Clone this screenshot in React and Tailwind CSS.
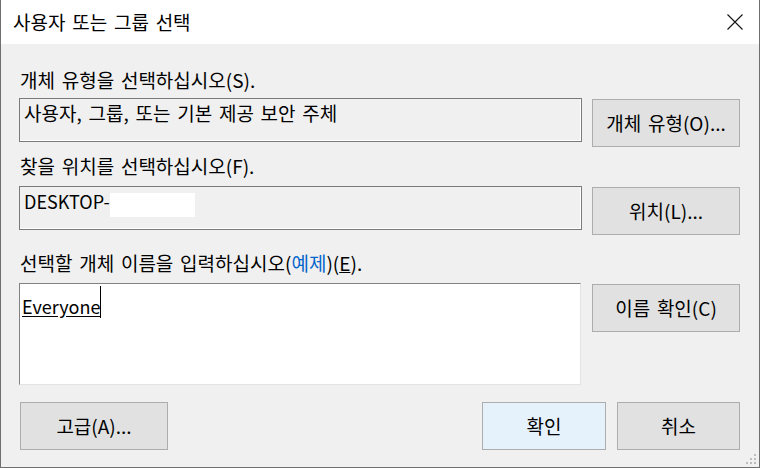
import React from "react";

function Btn({ children, className = "" }) {
  return (
    <div
      className={
        "flex items-center justify-center h-[48px] bg-[#e1e1e1] border border-[#adadad] shrink-0 " +
        className
      }
    >
      {children}
    </div>
  );
}

export default function App() {
  return (
    <div className="relative w-[760px] h-[468px] bg-[#f0f0f0] border-x border-b border-[#6f6f6f] flex flex-col font-['Noto_Sans_CJK_KR',sans-serif] text-[19px] leading-[24px] [word-spacing:2.5px] text-black">
      {/* title bar */}
      <div className="h-[44px] shrink-0 bg-white flex items-center justify-between pl-[12px] pr-[16px]">
        <span>사용자 또는 그룹 선택</span>
        <svg width="16" height="16" viewBox="0 0 16 16">
          <path d="M0.5 0.5 L15.5 15.5 M15.5 0.5 L0.5 15.5" stroke="#111" strokeWidth="1.1" fill="none" />
        </svg>
      </div>

      <div className="flex flex-col pl-[18px] pr-[19px]">
        <div className="mt-[24px] h-[24px] pl-[1px]">개체 유형을 선택하십시오(S).</div>
        <div className="mt-[6px] flex items-start gap-[10px]">
          <div className="w-[563px] h-[44px] border border-[#7a7a7a] shadow-[inset_-1px_-1px_0_#ffffff] pl-[4px] pt-[2px]">
            사용자, 그룹, 또는 기본 제공 보안 주체
          </div>
          <Btn className="mt-[1px] w-[148px]">개체 유형(O)...</Btn>
        </div>

        <div className="mt-[7px] h-[24px] pl-[1px]">찾을 위치를 선택하십시오(F).</div>
        <div className="mt-[8px] flex items-start gap-[10px]">
          <div className="w-[563px] h-[44px] border border-[#7a7a7a] shadow-[inset_-1px_-1px_0_#ffffff] pl-[4px] pt-[2px] flex items-start">
            <span className="text-[18px]">DESKTOP-</span>
            <span className="mt-[4px] w-[85px] h-[24px] bg-white" />
          </div>
          <Btn className="mt-[1px] w-[148px]">위치(L)...</Btn>
        </div>

        <div className="mt-[16px] h-[24px] pl-[1px]">
          선택할 개체 이름을 입력하십시오(<span className="text-[#0066cc]">예제</span>)(<span className="underline">E</span>).
        </div>
        <div className="mt-[8px] flex items-start gap-[10px]">
          <div className="w-[562px] h-[102px] bg-white border border-t-[#828282] border-l-[#828282] border-r-[#e3e3e3] border-b-[#e3e3e3] pl-[2px] pt-[2px]">
            <div className="flex items-end">
              <span className="text-[18px] underline underline-offset-[2px]">Everyone</span>
              <span className="w-[1px] h-[32px] bg-black" />
            </div>
          </div>
          <Btn className="mt-[1px] ml-[1px] w-[148px]">이름 확인(C)</Btn>
        </div>

        <div className="mt-[17px] flex items-start justify-between">
          <Btn className="ml-[1px] w-[148px]">고급(A)...</Btn>
          <div className="flex gap-[11px]">
            <Btn className="w-[124px] bg-[#e5f1fb] border-[#0078d7]">확인</Btn>
            <Btn className="w-[123px]">취소</Btn>
          </div>
        </div>
      </div>

      {/* resize grip */}
      <svg className="absolute right-[2px] bottom-[2px]" width="12" height="12" viewBox="0 0 12 12">
        <rect x="9" y="1" width="2" height="2" fill="#bcbcbc" />
        <rect x="5" y="5" width="2" height="2" fill="#bcbcbc" />
        <rect x="9" y="5" width="2" height="2" fill="#bcbcbc" />
        <rect x="1" y="9" width="2" height="2" fill="#bcbcbc" />
        <rect x="5" y="9" width="2" height="2" fill="#bcbcbc" />
        <rect x="9" y="9" width="2" height="2" fill="#bcbcbc" />
      </svg>
    </div>
  );
}
